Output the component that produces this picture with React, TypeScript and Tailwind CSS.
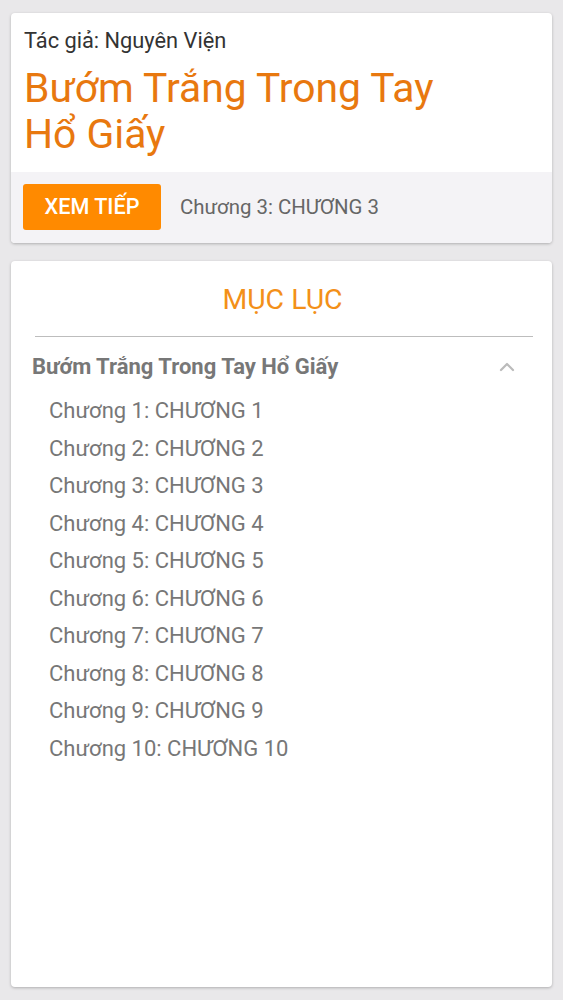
import { ChevronUp } from "lucide-react"

const chapters = Array.from({ length: 10 }, (_, i) => `Chương ${i + 1}: CHƯƠNG ${i + 1}`)

export default function App() {
  return (
    <div className="min-h-[1000px] bg-[#e9e8ea] px-[11px] pt-[13px] pb-[13px] font-['Roboto',sans-serif]">
      <div className="rounded-[4px] bg-white shadow-[0_1px_3px_rgba(0,0,0,0.25)] overflow-hidden">
        <div className="px-[13px] pt-[14px] pb-[15px]">
          <p className="text-[21.8px] leading-[28px] text-[#333]">Tác giả: Nguyên Viện</p>
          <h1 className="mt-[10px] text-[40.8px] leading-[46px] text-[#e8780f] pr-[80px]">Bướm Trắng Trong Tay Hổ Giấy</h1>
        </div>
        <div className="flex items-center gap-[19px] bg-[#f4f3f6] px-[12px] pt-[12px] pb-[13px]">
          <button className="h-[46px] w-[138px] rounded-[3px] bg-[#ff8a00] text-[21.6px] font-medium text-white">XEM TIẾP</button>
          <span className="text-[20.4px] text-[#666]">Chương 3: CHƯƠNG 3</span>
        </div>
      </div>

      <div className="mt-[18px] h-[726px] rounded-[4px] bg-white shadow-[0_1px_3px_rgba(0,0,0,0.25)] pl-[24px] pr-[19px] pt-[21px]">
        <h2 className="-ml-[3px] text-center text-[28.4px] leading-[36px] text-[#f39019]">MỤC LỤC</h2>
        <div className="mt-[18px] h-px bg-[#bdbdbd]" />
        <div className="mt-[16px] flex items-center justify-between">
          <span className="-ml-[3px] text-[22px] leading-[28px] font-bold text-[#777]">Bướm Trắng Trong Tay Hổ Giấy</span>
          <ChevronUp className="mr-[14px] h-[24px] w-[24px] text-[#bbb]" strokeWidth={2.25} />
        </div>
        <ul className="mt-[11px] pl-[14px]">
          {chapters.map((c) => (
            <li key={c} className="text-[22px] leading-[37.5px] text-[#777]">{c}</li>
          ))}
        </ul>
      </div>
    </div>
  )
}
